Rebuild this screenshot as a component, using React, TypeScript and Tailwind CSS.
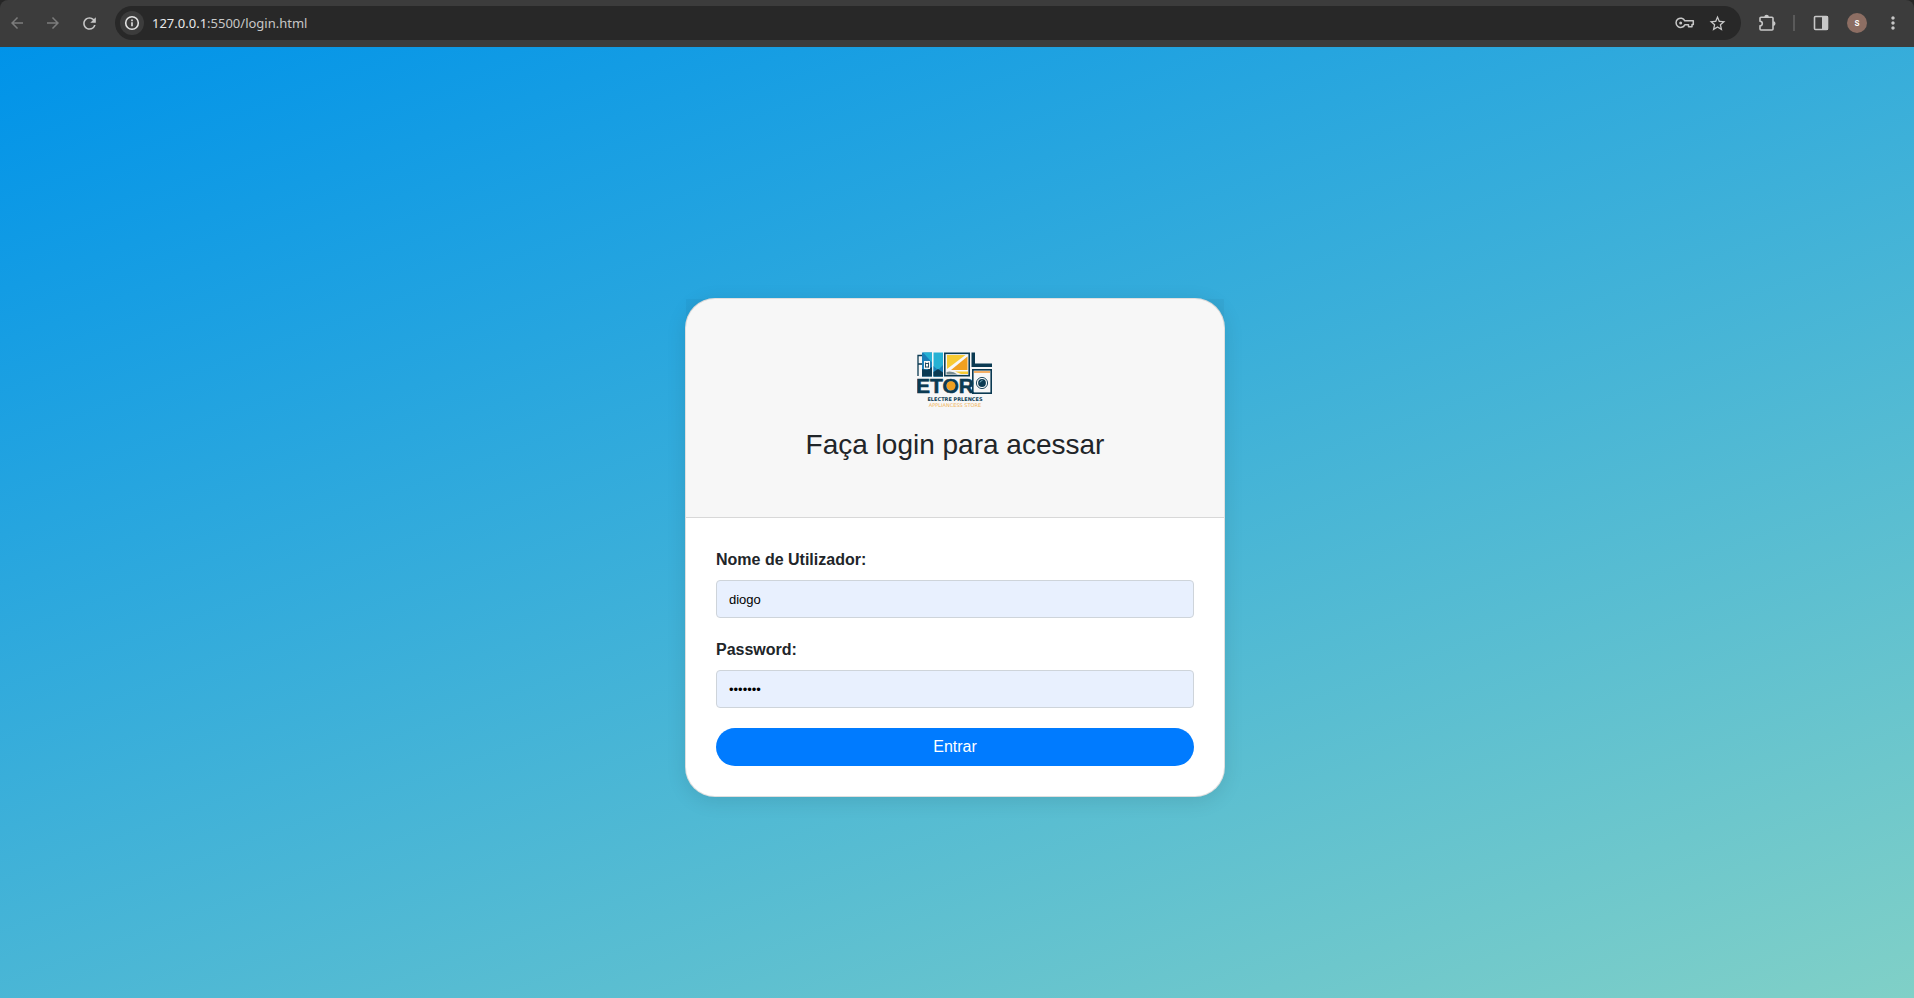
import type { ReactNode } from "react";
import {
  MdArrowBack,
  MdArrowForward,
  MdRefresh,
  MdStarBorder,
  MdMoreVert,
} from "react-icons/md";

function ToolButton({ label, dim = false, children }: { label: string; dim?: boolean; children: ReactNode }) {
  return (
    <button
      type="button"
      aria-label={label}
      className={
        dim
          ? "flex size-7 shrink-0 items-center justify-center text-[#7c7c7c]"
          : "flex size-7 shrink-0 items-center justify-center text-[#c7c7c7]"
      }
    >
      {children}
    </button>
  );
}

function BrowserBar() {
  return (
    <header className="shrink-0 bg-[#262626]">
      <div className="flex h-[47px] items-center rounded-t-lg bg-[#3c3c3c] pr-[7px] pb-px pl-[3px]">
        <nav aria-label="Browser" className="flex items-center gap-2">
          <ToolButton label="Back" dim>
            <MdArrowBack size={18} />
          </ToolButton>
          <ToolButton label="Forward" dim>
            <MdArrowForward size={18} />
          </ToolButton>
          <ToolButton label="Reload">
            <MdRefresh size={19} />
          </ToolButton>
        </nav>
        <div className="ml-3 flex h-[34px] flex-1 items-center rounded-full bg-[#282828] pr-[10px] pl-[5px]">
          <button
            type="button"
            aria-label="Site information"
            className="flex size-6 shrink-0 items-center justify-center rounded-full bg-[#3c3c3c] text-[#e3e3e3]"
          >
            <svg width="16" height="16" viewBox="0 0 16 16" fill="none">
              <circle cx="8" cy="8" r="6.300" stroke="currentColor" strokeWidth="1.600" />
              <path d="M7.200 7.200h1.600v4H7.200zM7.200 4.600h1.600v1.600H7.200z" fill="currentColor" />
            </svg>
          </button>
          <span className="ml-2 flex-1 font-['Noto_Sans',sans-serif] text-[13px] leading-5 text-[#c7c7c7]">
            <span className="text-[#e8e8e8]">127.0.0.1</span>:5500/login.html
          </span>
          <div className="flex items-center gap-1">
            <ToolButton label="Passwords">
              <svg width="20" height="12" viewBox="0 0 20 12" fill="none" stroke="currentColor" strokeWidth="1.500">
                <path
                  d="M9.800 3.800H18.300V7.500H17V9.800H13.500V7.800H9.800A4.600 4.600 0 1 1 9.800 3.800Z"
                  strokeLinejoin="round"
                />
                <circle cx="5.700" cy="5.900" r="1.500" fill="currentColor" stroke="none" />
              </svg>
            </ToolButton>
            <ToolButton label="Bookmark">
              <MdStarBorder size={19} />
            </ToolButton>
          </div>
        </div>
        <div className="ml-3 flex items-center gap-3">
          <ToolButton label="Extensions">
            <svg width="18" height="18" viewBox="0 0 18 18" fill="none">
              <path
                d="M2 4.200a1 1 0 0 1 1-1h11a1 1 0 0 1 1 1V15a1 1 0 0 1-1 1H3a1 1 0 0 1-1-1v-3.200a2.300 2.300 0 0 0 0-4.600z"
                stroke="currentColor"
                strokeWidth="1.600"
                strokeLinejoin="round"
              />
              <path d="M6.300 3a2.300 2.300 0 0 1 4.600 0zM15.200 7.300a2.300 2.300 0 0 1 0 4.600z" fill="currentColor" />
            </svg>
          </ToolButton>
          <span className="h-4 w-0.5 bg-[#5a5a5a]" />
          <ToolButton label="Side panel">
            <svg width="16" height="16" viewBox="0 0 16 16" fill="none">
              <rect x="1.500" y="1.500" width="13" height="13" rx="1" stroke="currentColor" strokeWidth="1.600" />
              <rect x="9" y="1" width="6" height="14" fill="currentColor" />
            </svg>
          </ToolButton>
          <button
            type="button"
            aria-label="Profile"
            className="flex size-5 items-center justify-center rounded-full bg-[#8d6e63] font-['Roboto',sans-serif] text-[10px] leading-none font-medium text-white"
          >
            s
          </button>
          <ToolButton label="Menu">
            <MdMoreVert size={20} />
          </ToolButton>
        </div>
      </div>
    </header>
  );
}

function StoreLogo() {
  return (
    <svg width="76" height="56" viewBox="0 0 76 56" role="img" aria-label="Etor appliances store">
      {/* fridge and lockers */}
      <path d="M1 24V3.500h4M1 12h4" fill="none" stroke="#0b3a52" strokeWidth="1.300" />
      <path d="M5 .5h10v24H5z" fill="#1c7fb8" />
      <path d="M6 .5h9v10z" fill="#27b2d4" />
      <path d="M5 17l5 1 5-3v9.500H5z" fill="#0b3a52" />
      <path d="M16.500.5h9.500v24h-9.500z" fill="#27b2d4" />
      <path d="M16.500 14l4.500 4 5-5v11.500h-9.500z" fill="#1c7fb8" />
      <path d="M16.500 20l4.500-3 5 3.500v4h-9.500z" fill="#0b3a52" />
      <rect x="7" y="9" width="6" height="8" fill="#f7f7f7" />
      <path d="M8.500 10.500v5M11.500 10.500v5M8.500 11.500h3M8.500 15h3" stroke="#0b3a52" strokeWidth=".9" />
      {/* screen */}
      <rect x="27.800" y="1.300" width="24.400" height="22.400" fill="#f7f7f7" stroke="#0b3a52" strokeWidth="1.600" />
      <path d="M30 3h18.500L30 17z" fill="#f7cb33" />
      <path d="M50.500 4.500V18H34z" fill="#f0a020" />
      <path d="M29.500 20q6-1.500 11 2.500h-11z" fill="#7a8c8f" />
      <path d="M38 19.500h13V22h-7z" fill="#f7cb33" />
      {/* counter */}
      <path d="M54.500.5h3.500V11.500h17V15H54.500z" fill="#0b3a52" />
      {/* washer */}
      <rect x="55.800" y="17.800" width="18.400" height="23.400" fill="#f7f7f7" stroke="#0b3a52" strokeWidth="1.600" />
      <path d="M57 19h16v2H57z" fill="#f5b067" />
      <circle cx="65" cy="31" r="5.600" fill="#f7f7f7" stroke="#0b3a52" strokeWidth=".9" />
      <circle cx="65" cy="31" r="3.900" fill="#0b3a52" />
      <path d="M63 30.500q.5-2 2.500-2" fill="none" stroke="#7fb4c4" strokeWidth=".9" />
      {/* name */}
      <text
        x="-1"
        y="41"
        fontFamily="Liberation Sans, sans-serif"
        fontSize="21"
        fontWeight="700"
        fill="#0b3a52"
        stroke="#0b3a52"
        strokeWidth="0.600"
      >
        ETOR
      </text>
      <circle cx="34" cy="33.800" r="4.500" fill="#f0a020" />
      <g fontFamily="DejaVu Sans, sans-serif" textAnchor="middle">
        <text x="38" y="49" fontSize="5" fontWeight="700" fill="#0b3a52">
          ELECTRE PRLENCES
        </text>
        <text x="38" y="55" fontSize="5" fill="#f0b35a">
          APPLIANCESS STORE
        </text>
      </g>
    </svg>
  );
}

function Field({ id, label, type, value }: { id: string; label: string; type: string; value: string }) {
  return (
    <div className="mb-5">
      <label htmlFor={id} className="mb-2 block text-base leading-6 font-bold">
        {label}
      </label>
      <input
        id={id}
        name={id}
        type={type}
        defaultValue={value}
        className="block h-[38px] w-full rounded border border-[#ced4da] bg-[#e8f0fe] px-3 text-[13px] text-black outline-none"
      />
    </div>
  );
}

export default function App() {
  return (
    <div className="flex min-h-screen flex-col font-['Liberation_Sans',Arial,sans-serif] text-[#212529]">
      <BrowserBar />
      <main className="flex flex-1 items-center justify-center bg-[linear-gradient(160deg,#0093e9_0%,#80d0c7_100%)] pt-[50px] pr-1">
        <section className="w-full max-w-[540px] rounded-[30px] border border-black/[0.125] bg-white bg-clip-border shadow-[0_4px_20px_rgba(0,0,0,0.1)]">
          <div className="flex flex-col items-center border-b border-black/[0.125] bg-black/[0.03] pt-[53px] pb-[55px]">
            <StoreLogo />
            <h1 className="mt-5 text-[28px] leading-[34px]">Faça login para acessar</h1>
          </div>
          <form className="p-[30px]" onSubmit={(event) => event.preventDefault()}>
            <Field id="username" label="Nome de Utilizador:" type="text" value="diogo" />
            <Field id="password" label="Password:" type="password" value="diogo12" />
            <button
              type="submit"
              className="block h-[38px] w-full rounded-full bg-[#007bff] text-base text-white"
            >
              Entrar
            </button>
          </form>
        </section>
      </main>
    </div>
  );
}
